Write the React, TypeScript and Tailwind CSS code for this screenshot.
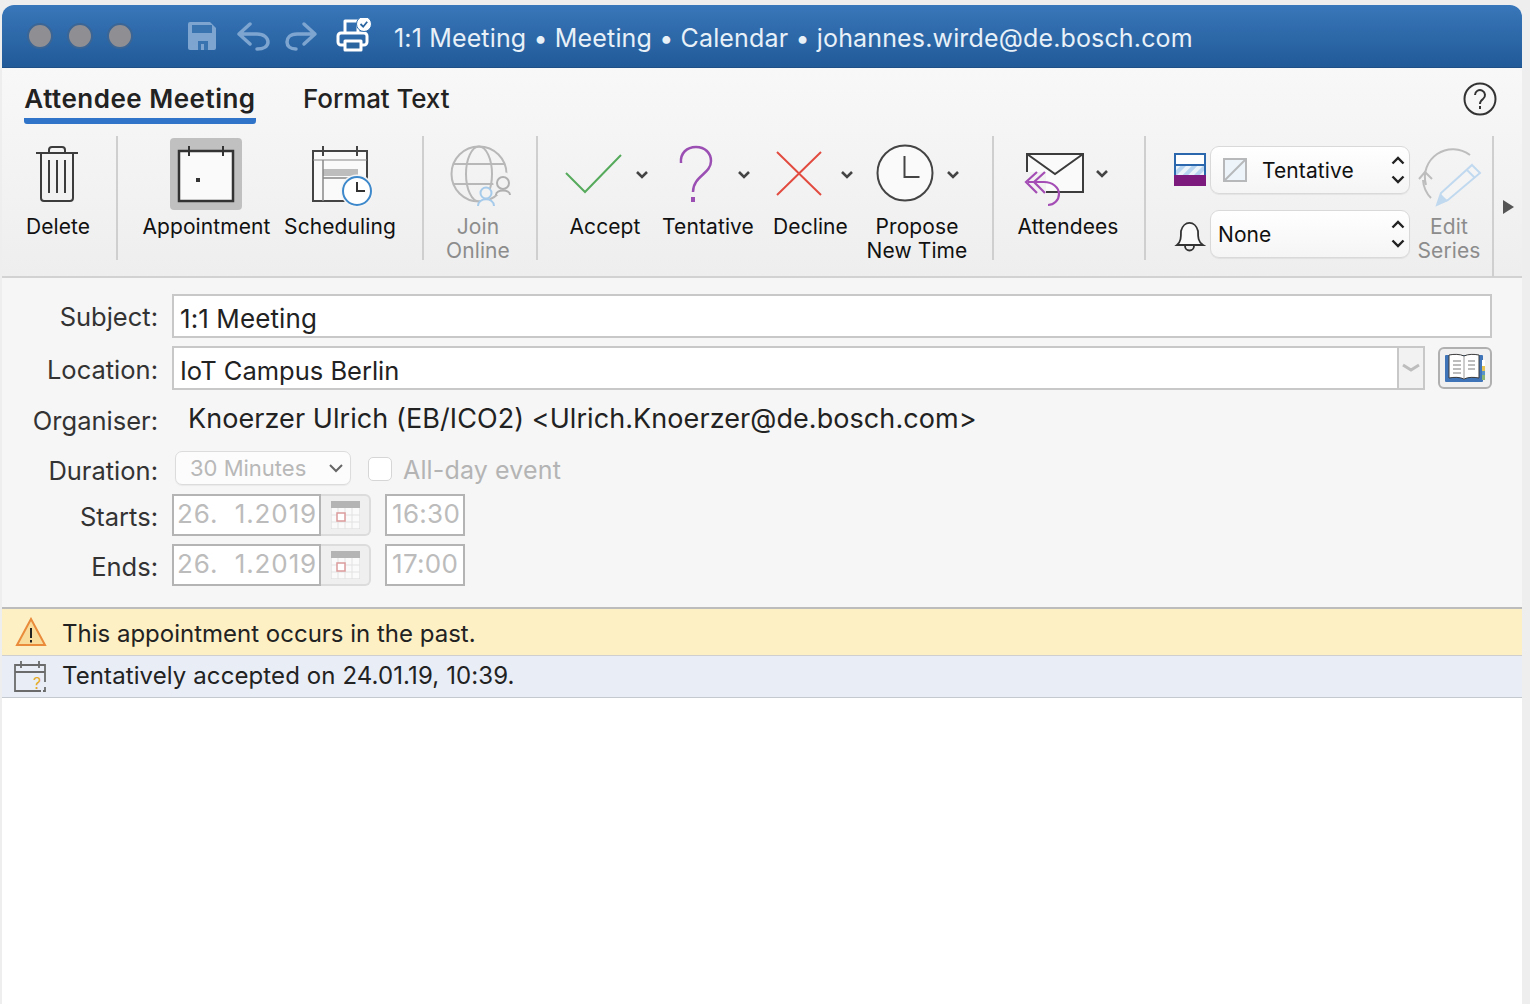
import React from "react";

const font = "font-['Inter','Liberation_Sans',sans-serif]";

// Draws in screenshot coordinates, so the strokes can be read straight off the picture
const Art = ({ x, y = 136, w, h = 79, children }: { x: number; y?: number; w: number; h?: number; children: React.ReactNode }) => (
  <svg width={w} height={h} viewBox={`${x} ${y} ${w} ${h}`} fill="none" className="block shrink-0">
    {children}
  </svg>
);

const Chevron = ({ x, y = 171 }: { x: number; y?: number }) => (
  <path d={`M${x + 1} ${y + 1}l5 5 5-5`} stroke="#444" strokeWidth="2.600" />
);

const RibbonButton = ({
  x,
  w,
  lines,
  disabled,
  children,
}: {
  x: number;
  w: number;
  lines: string[];
  disabled?: boolean;
  children: React.ReactNode;
}) => (
  <div className="flex flex-col items-center shrink-0" style={{ width: w }}>
    <Art x={x} w={w}>
      {children}
    </Art>
    <div className={`text-center text-[21px] leading-[24px] tracking-[0.1px] whitespace-nowrap ${disabled ? "text-[#8c8c8c]" : "text-[#111]"}`}>
      {lines.map((l) => (
        <div key={l}>{l}</div>
      ))}
    </div>
  </div>
);

const Group = ({ w, className, children }: { w: number; className?: string; children: React.ReactNode }) => (
  <div className={`flex h-[124px] shrink-0 border-r-2 border-[#cfcfcf] ${className ?? ""}`} style={{ width: w }}>
    {children}
  </div>
);

const UpDown = () => (
  <svg width="16" height="32" viewBox="0 0 16 32" fill="none" className="shrink-0">
    <path d="M2.500 9.500L8 4l5.500 5.500M2.500 22.500L8 28l5.500-5.500" stroke="#222" strokeWidth="2.400" />
  </svg>
);

const FormLabel = ({ children }: { children: React.ReactNode }) => (
  <div className="w-[156px] shrink-0 text-right text-[25.500px] leading-[30px] text-[#333]">{children}</div>
);

const CalendarPick = ({ y }: { y: number }) => (
  <div className="w-[50px] h-[42px] bg-[#efefef] border-2 border-l-0 border-[#dcdcdc] rounded-r-[6px] flex items-center justify-center">
    <Art x={331} y={y} w={29} h={28}>
      <rect x={331} y={y} width={29} height={28} fill="#fafafa" stroke="#d8d8d8" />
      <rect x={331} y={y} width={29} height={7} fill="#b4b4b4" />
      <path d={`M331 ${y + 14}h29M331 ${y + 21}h29M338 ${y + 7}v21M345 ${y + 7}v21M352 ${y + 7}v21`} stroke="#e2e2e2" />
      <rect x={337} y={y + 12} width={8} height={8} fill="#fff" stroke="#dc9a9a" strokeWidth="1.500" />
    </Art>
  </div>
);

const DateRow = ({ label, date, time, y }: { label: string; date: string; time: string; y: number }) => (
  <div className="flex items-center h-[42px] mt-[8px]">
    <div className="mt-[4px]">
      <FormLabel>{label}</FormLabel>
    </div>
    <div className="ml-[14px] flex">
      <div className="w-[149px] h-[42px] border-2 border-[#b4b4b4] bg-white pl-[3px] text-[26px] leading-[36px] tracking-[0.9px] text-[#bcbcbc] whitespace-pre">
        {date}
      </div>
      <CalendarPick y={y} />
    </div>
    <div className="ml-[14px] w-[80px] h-[42px] border-2 border-[#b4b4b4] bg-white pl-[5px] text-[26px] leading-[36px] tracking-[0.3px] text-[#bcbcbc]">
      {time}
    </div>
  </div>
);

export default function App() {
  return (
    <div className={`w-[1530px] h-[1004px] overflow-hidden bg-[#eeeeee] pt-[5px] pl-[2px] pr-[8px] ${font}`}>
      <div className="h-[999px] flex flex-col bg-white rounded-t-[12px] overflow-hidden">
        {/* title bar */}
        <div className="h-[63px] shrink-0 flex items-center bg-gradient-to-b from-[#3877ba] to-[#225a98] border-b border-[#1e4f86]">
          <div className="ml-[25px] flex gap-[14px]">
            {[0, 1, 2].map((i) => (
              <div key={i} className="w-[26px] h-[26px] rounded-full bg-[#8f8e92] border-2 border-[#3a6595]" />
            ))}
          </div>
          <div className="ml-[53px]">
            <Art x={186} y={18} w={198} h={36}>
              <path d="M190 22h20l6 6v20a2 2 0 0 1-2 2h-24a2 2 0 0 1-2-2v-24a2 2 0 0 1 2-2z" fill="#7da5d0" />
              <rect x="192" y="25" width="20" height="8" fill="#3a74b0" />
              <rect x="198" y="41" width="10" height="9" fill="#3a74b0" />
              <rect x="201" y="44" width="3" height="6" fill="#7da5d0" />
              <g stroke="#7da5d0" strokeWidth="3.500" strokeLinecap="round" strokeLinejoin="round">
                <path d="M250 24l-11 10 11 10M240 34h17c7 0 11 4 11 8s-4 7-11 7" />
                <path d="M304 24l11 10-11 10M314 34h-17c-7 0-10 4-10 8s3 7 9 7" />
              </g>
              <g stroke="#fff" strokeWidth="3" strokeLinejoin="round">
                <path d="M345 33V21h13v12" />
                <rect x="338" y="33" width="29" height="12" rx="3" />
                <rect x="345" y="41" width="16" height="9" fill="#2a659f" />
              </g>
              <circle cx="364" cy="24" r="7.500" fill="#fff" stroke="#2f6dad" />
              <path d="M360.500 24l2.700 2.700 4-5" stroke="#2a659f" strokeWidth="1.800" />
            </Art>
          </div>
          <div className="ml-[10px] mt-[4px] text-[25px] leading-[30px] text-[#e8f0f8] whitespace-nowrap tracking-[0.15px]">
            1:1 Meeting • Meeting • Calendar • johannes.wirde@de.bosch.com
          </div>
        </div>

        {/* ribbon */}
        <div className="h-[210px] shrink-0 bg-gradient-to-b from-[#f8f8f8] to-[#eeeeee] border-b-2 border-[#d2d2d2]">
          <div className="h-[68px] flex items-start relative">
            <div className="ml-[22px] mt-[14px] w-[232px] h-[42px] border-b-[6px] border-[#2f74c9] rounded-b-[3px] text-center text-[26px] leading-[34px] font-semibold tracking-[0.5px] text-[#222] whitespace-nowrap">
              Attendee Meeting
            </div>
            <div className="ml-[47px] mt-[14px] text-[26px] leading-[34px] font-medium text-[#222] tracking-[-0.1px] whitespace-nowrap">Format Text</div>
            <svg width="34" height="34" viewBox="0 0 34 34" fill="none" className="ml-auto mr-[25px] mt-[14px]">
              <circle cx="17" cy="17" r="15.500" stroke="#333" strokeWidth="2" />
              <path d="M12 13a5 5 0 1 1 8 4c-2 1.500-3 2.500-3 5" stroke="#333" strokeWidth="2" />
              <rect x="16" y="24" width="2" height="3" fill="#333" />
            </svg>
          </div>
          <div className="flex items-start">
            <Group w={116}>
              <RibbonButton x={2} w={112} lines={["Delete"]}>
                <path d="M41 153v45a3 3 0 0 0 3 3h26a3 3 0 0 0 3-3v-45M36 153h42M49 153v-3a3 3 0 0 1 3-3h10a3 3 0 0 1 3 3v3M49 160v33M57 160v33M65 160v33" stroke="#3c3c3c" strokeWidth="2" />
              </RibbonButton>
            </Group>
            <Group w={306} className="pl-[24px] gap-[13px]">
              <RibbonButton x={142} w={129} lines={["Appointment"]}>
                <rect x="170" y="138" width="72" height="72" rx="4" fill="#c0c0c0" />
                <rect x="179" y="151" width="54" height="50" fill="#fafafa" stroke="#333" strokeWidth="2.500" />
                <path d="M189 146v10M223 146v10" stroke="#333" strokeWidth="2" />
                <rect x="196" y="178" width="4" height="4" fill="#333" />
              </RibbonButton>
              <RibbonButton x={284} w={112} lines={["Scheduling"]}>
                <rect x="313" y="151" width="54" height="50" fill="#fafafa" stroke="#444" strokeWidth="2" />
                <path d="M323 146v10M357 146v10" stroke="#444" strokeWidth="2" />
                <path d="M313 160h54" stroke="#888" />
                <rect x="323" y="169" width="35" height="7" fill="#bdbdbd" />
                <path d="M323 160v41M323 178h35" stroke="#888" strokeWidth="1.500" />
                <circle cx="357" cy="191" r="16.500" fill="#f4f4f4" />
                <circle cx="357" cy="191" r="14" fill="#fff" stroke="#3d88cb" strokeWidth="2" />
                <path d="M357 182v9h8" stroke="#333" strokeWidth="2" />
              </RibbonButton>
            </Group>
            <Group w={114} className="pl-[15px]">
              <RibbonButton x={439} w={78} lines={["Join", "Online"]} disabled>
                <g stroke="#b8b8b8" strokeWidth="2">
                  <circle cx="479" cy="174" r="27.500" />
                  <ellipse cx="479" cy="174" rx="13" ry="27.500" />
                  <path d="M453 164h52M453 184h52" />
                </g>
                <circle cx="503" cy="182" r="10" fill="#f2f2f2" />
                <circle cx="503" cy="183" r="6" fill="#f2f2f2" stroke="#b0b0b0" strokeWidth="2" />
                <path d="M496 195c0-6 14-6 14 0" stroke="#b0b0b0" strokeWidth="2" fill="#f2f2f2" />
                <circle cx="486" cy="193" r="5.500" fill="#f2f2f2" stroke="#a6cbea" strokeWidth="2" />
                <path d="M478 206c0-9 16-9 16 0" stroke="#a6cbea" strokeWidth="2" fill="#f2f2f2" />
              </RibbonButton>
            </Group>
            <Group w={456} className="pl-[17px]">
              <RibbonButton x={555} w={100} lines={["Accept"]}>
                <path d="M566 173l19 19 36-37" stroke="#56aa5c" strokeWidth="2" />
                <Chevron x={636} />
              </RibbonButton>
              <RibbonButton x={655} w={106} lines={["Tentative"]}>
                <path d="M681 163c-1-10 6-16 15-16s15 6 15 14c0 13-18 15-18 31" stroke="#9b4fb3" strokeWidth="2.500" />
                <rect x="691" y="197" width="4" height="5" fill="#9b4fb3" />
                <Chevron x={738} />
              </RibbonButton>
              <RibbonButton x={761} w={99} lines={["Decline"]}>
                <path d="M777 152l44 43M821 152l-44 43" stroke="#e24c40" strokeWidth="2" />
                <Chevron x={841} />
              </RibbonButton>
              <RibbonButton x={860} w={114} lines={["Propose", "New Time"]}>
                <circle cx="905" cy="173" r="27.500" fill="#fafafa" stroke="#444" strokeWidth="2" />
                <path d="M904.500 156v21h15" stroke="#444" strokeWidth="2" />
                <Chevron x={947} />
              </RibbonButton>
            </Group>
            <Group w={152} className="pl-[16px]">
              <RibbonButton x={1010} w={116} lines={["Attendees"]}>
                <path d="M1027 154h56v38h-56z" fill="#fafafa" stroke="#3c3c3c" strokeWidth="2" />
                <path d="M1027 154l28 20 28-20" stroke="#3c3c3c" strokeWidth="2" />
                <rect x="1022" y="172" width="24" height="24" fill="#f2f2f2" />
                <path d="M1037 172l-11 10 11 11M1045 172l-11 10 11 11M1028 182h16a15 12 0 0 1 15 12c0 6-5 11-11 11" stroke="#a44db5" strokeWidth="2.200" />
                <Chevron x={1096} y={170} />
              </RibbonButton>
            </Group>
            <div className="w-[348px] h-[141px] shrink-0 -mb-[17px] border-r-2 border-[#cfcfcf] flex pl-[26px]">
              <div className="mt-[10px] flex flex-col gap-[16px]">
                <div className="flex items-center">
                  <Art x={1172} y={150} w={38} h={40}>
                    <defs>
                      <pattern id="hatch" width="8" height="8" patternUnits="userSpaceOnUse" patternTransform="rotate(45)">
                        <rect width="8" height="8" fill="#eaf2fa" />
                        <rect width="4" height="8" fill="#b7d5f0" />
                      </pattern>
                    </defs>
                    <rect x="1175" y="154" width="30" height="31" fill="#fff" stroke="#2a67ad" strokeWidth="2" />
                    <rect x="1176" y="165" width="28" height="10" fill="url(#hatch)" />
                    <path d="M1175 165h30" stroke="#2a67ad" strokeWidth="2" />
                    <rect x="1174" y="175" width="32" height="11" fill="#7c1a7e" />
                  </Art>
                  <div className="w-[200px] h-[48px] bg-gradient-to-b from-white to-[#f5f5f5] border border-[#d9d9d9] rounded-[9px] shadow-[0_1px_1px_rgba(0,0,0,0.06)] flex items-center pl-[11px] pr-[3px]">
                    <svg width="26" height="26" viewBox="0 0 26 26" fill="none" className="shrink-0">
                      <rect x="2" y="2" width="22" height="22" fill="#edf4fa" stroke="#b6b8ba" strokeWidth="2" />
                      <path d="M3 23L23 3" stroke="#b6b8ba" strokeWidth="2" />
                    </svg>
                    <span className="ml-[14px] mt-[2px] text-[21px] tracking-[0.1px] text-[#111]">Tentative</span>
                    <div className="ml-auto">
                      <UpDown />
                    </div>
                  </div>
                </div>
                <div className="flex items-center">
                  <Art x={1172} y={214} w={38} h={40}>
                    <path d="M1177 245c4-3 4-8 4-14a9 12 0 0 1 17 0c0 6 0 11 5 14z" fill="#fafafa" stroke="#333" strokeWidth="1.800" />
                    <path d="M1185 246a4.500 4.500 0 0 0 9 0" stroke="#333" strokeWidth="1.800" />
                  </Art>
                  <div className="w-[200px] h-[48px] bg-gradient-to-b from-white to-[#f5f5f5] border border-[#d9d9d9] rounded-[9px] shadow-[0_1px_1px_rgba(0,0,0,0.06)] flex items-center pl-[7px] pr-[3px]">
                    <span className="mt-[2px] text-[21px] tracking-[0.1px] text-[#111]">None</span>
                    <div className="ml-auto">
                      <UpDown />
                    </div>
                  </div>
                </div>
              </div>
              <RibbonButton x={1410} w={78} lines={["Edit", "Series"]} disabled>
                <path d="M1426 185a28 28 0 0 1 44-30M1431 198a28 28 0 0 1-8-18" stroke="#bdbdbd" strokeWidth="2" />
                <path d="M1419 179l6-7 7 7" stroke="#bdbdbd" strokeWidth="2" />
                <path d="M1472 165l8 8-32 27-11 5 4-12z" fill="#f4f4f4" stroke="#c1d9ef" strokeWidth="2" />
                <path d="M1437 205l4-11 7 7z" fill="#c1d9ef" />
                <path d="M1467 170l8 8" stroke="#c1d9ef" strokeWidth="2" />
              </RibbonButton>
            </div>
            <svg width="12" height="14" viewBox="0 0 12 14" className="ml-[9px] mt-[64px] shrink-0">
              <path d="M0 0l11 7-11 7z" fill="#555" />
            </svg>
          </div>
        </div>

        {/* form */}
        <div className="h-[331px] shrink-0 bg-[#f6f6f6] pt-[16px] border-b-2 border-[#bcbcbc]">
          <div className="flex items-center h-[44px]">
            <div className="mt-[2px]">
              <FormLabel>Subject:</FormLabel>
            </div>
            <div className="ml-[14px] w-[1320px] h-[44px] bg-white border-2 border-[#c8c8c8] pl-[6px] text-[26px] leading-[45px] tracking-[0.1px] text-[#222]">1:1 Meeting</div>
          </div>
          <div className="flex items-center h-[44px] mt-[8px]">
            <div className="mt-[3px]">
              <FormLabel>Location:</FormLabel>
            </div>
            <div className="ml-[14px] w-[1253px] h-[44px] bg-white border-2 border-[#c8c8c8] flex">
              <div className="flex-1 pl-[6px] text-[25.500px] leading-[45px] text-[#222]">IoT Campus Berlin</div>
              <div className="w-[26px] bg-[#f2f2f2] border-l-2 border-[#c8c8c8] flex items-center justify-center">
                <svg width="18" height="10" viewBox="0 0 18 10" fill="none">
                  <path d="M1 2l8 5 8-5" stroke="#bdbdbd" strokeWidth="3" />
                </svg>
              </div>
            </div>
            <div className="ml-[13px] w-[54px] h-[42px] border-2 border-[#b0b0b0] rounded-[6px] bg-[#f0f0f0] flex items-center justify-center">
              <svg width="42" height="30" viewBox="0 0 42 30" fill="none">
                <rect x="1" y="2" width="38" height="27" rx="1" fill="#3f74b8" />
                <path d="M38 7h3v6h-3z" fill="#fff" />
                <path d="M38 13h3v5h-3z" fill="#e6c24e" />
                <path d="M38 18h3v4h-3z" fill="#5a95c8" />
                <path d="M38 22h3v5h-3z" fill="#8cb573" />
                <path d="M5 2c5-1 11-1 15 1 4-2 10-2 15-1v23c-5-1-11-1-15 1-4-2-10-2-15-1z" fill="#fff" stroke="#3a3a3a" strokeWidth="1" />
                <path d="M20 3v23" stroke="#9a9a9a" />
                <path d="M9 8h8M9 12h8M9 16h8M9 20h8M24 8h7M24 12h7M24 16h7" stroke="#bdbdbd" strokeWidth="1.800" />
              </svg>
            </div>
          </div>
          <div className="flex items-center h-[60px]">
            <div className="mt-[2px]">
              <FormLabel>Organiser:</FormLabel>
            </div>
            <div className="ml-[30px] -mt-[3px] text-[27px] leading-[32px] tracking-[0.07px] text-[#222] whitespace-nowrap">
              Knoerzer Ulrich (EB/ICO2) &lt;Ulrich.Knoerzer@de.bosch.com&gt;
            </div>
          </div>
          <div className="flex items-center h-[36px]">
            <div className="mt-[5px]">
              <FormLabel>Duration:</FormLabel>
            </div>
            <div className="ml-[17px] w-[176px] h-[34px] bg-white/70 border border-[#dcdcdc] rounded-[7px] shadow-[0_1px_1px_rgba(0,0,0,0.05)] flex items-center pl-[14px] pr-[7px]">
              <span className="text-[22px] text-[#b8b8b8]">30 Minutes</span>
              <svg width="14" height="10" viewBox="0 0 14 10" fill="none" className="ml-auto">
                <path d="M1 2l6 6 6-6" stroke="#666" strokeWidth="2" />
              </svg>
            </div>
            <div className="ml-[17px] mt-[2px] w-[24px] h-[24px] rounded-[5px] bg-white border border-[#d6d6d6]" />
            <span className="ml-[11px] mt-[5px] text-[25px] tracking-[0.15px] text-[#b4b4b4] whitespace-nowrap">All-day event</span>
          </div>
          <DateRow label="Starts:" date="26.  1.2019" time="16:30" y={501} />
          <DateRow label="Ends:" date="26.  1.2019" time="17:00" y={551} />
        </div>

        {/* info bars */}
        <div className="h-[47px] shrink-0 bg-[#fdf0c5] border-b border-[#cfcfcf] flex items-center">
          <svg width="32" height="30" viewBox="0 0 32 30" fill="none" className="ml-[13px] shrink-0">
            <path d="M16 2L2 28h28z" fill="#f8dc9c" stroke="#e98b3a" strokeWidth="2" />
            <path d="M16 11v10" stroke="#222" strokeWidth="2" />
            <rect x="15" y="23" width="2" height="2.500" fill="#222" />
          </svg>
          <span className="ml-[15px] mt-[3px] text-[24px] text-[#222] whitespace-nowrap">This appointment occurs in the past.</span>
        </div>
        <div className="h-[42px] shrink-0 bg-[#e8edf6] border-b border-[#c4c8cf] flex items-center relative">
          <svg width="34" height="34" viewBox="0 0 34 34" fill="none" className="ml-[11px] shrink-0">
            <path d="M28 31H2V5h30v17M2 12h30M8 1v7M26 1v7" stroke="#6b6b6b" strokeWidth="1.800" />
            <path d="M32 27v4h-2" stroke="#6b6b6b" strokeWidth="1.800" />
          </svg>
          <span className="absolute left-[31px] top-[18px] text-[16px] leading-[18px] text-[#e5a92a]">?</span>
          <span className="ml-[15px] -mt-[2px] text-[24px] tracking-[0.1px] text-[#222] whitespace-nowrap">Tentatively accepted on 24.01.19, 10:39.</span>
        </div>
        <div className="flex-1 bg-white" />
      </div>
    </div>
  );
}
